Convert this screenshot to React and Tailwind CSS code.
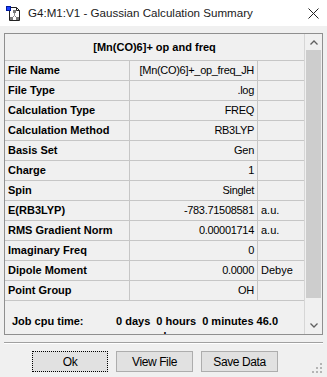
import React from 'react';

const rows = [
  ['File Name', '[Mn(CO)6]+_op_freq_JH', ''],
  ['File Type', '.log', ''],
  ['Calculation Type', 'FREQ', ''],
  ['Calculation Method', 'RB3LYP', ''],
  ['Basis Set', 'Gen', ''],
  ['Charge', '1', ''],
  ['Spin', 'Singlet', ''],
  ['E(RB3LYP)', '-783.71508581', 'a.u.'],
  ['RMS Gradient Norm', '0.00001714', 'a.u.'],
  ['Imaginary Freq', '0', ''],
  ['Dipole Moment', '0.0000', 'Debye'],
  ['Point Group', 'OH', ''],
];

function AppIcon() {
  return (
    <svg width="16" height="16" viewBox="0 0 16 16" className="shrink-0">
      <path d="M3.5 1.5h7l3 3v10h-10z" fill="#fff" stroke="#222" />
      <path d="M10.5 1.5v3h3" fill="none" stroke="#222" />
      <path d="M8.5 5.5v4M8.5 9.5l-3 3M8.5 9.5l3 3" stroke="#8a8a8a" strokeWidth="1" />
      <rect x="7" y="4" width="3" height="3" fill="#7a7a7a" />
      <rect x="4" y="11" width="3" height="3" fill="#7a7a7a" />
      <rect x="10" y="11" width="3" height="3" fill="#7a7a7a" />
      <rect x="0.5" y="0.5" width="4" height="4" fill="#1b3fff" stroke="#001a9a" />
    </svg>
  );
}

function Chevron({ down }) {
  return (
    <svg width="8" height="5" viewBox="0 0 8 5">
      <path
        d={down ? 'M0.5 0.5L4 4L7.5 0.5' : 'M0.5 4.5L4 1L7.5 4.5'}
        fill="none"
        stroke="#606060"
        strokeWidth="1.3"
      />
    </svg>
  );
}

function SizeGrip() {
  const dots = [
    [8, 0],
    [4, 4], [8, 4],
    [0, 8], [4, 8], [8, 8],
  ];
  return (
    <svg width="10" height="10" viewBox="0 0 10 10">
      {dots.map(([x, y]) => (
        <rect key={`${x}-${y}`} x={x} y={y} width="2" height="2" fill="#b4b4b4" />
      ))}
    </svg>
  );
}

export default function App() {
  return (
    <div className="w-[327px] h-[377px] bg-[#f0f0f0] overflow-hidden text-black font-['Liberation_Sans',Arial,sans-serif]">
      {/* title bar */}
      <div className="h-[26px] bg-white flex items-center">
        <div className="ml-[6px] mt-[1px]">
          <AppIcon />
        </div>
        <span className="ml-[6px] text-[11.6px] text-[#1a1a1a]">G4:M1:V1 - Gaussian Calculation Summary</span>
        <svg width="11" height="11" viewBox="0 0 11 11" className="ml-auto mr-[8px]">
          <path d="M0.5 0.5L10.5 10.5M10.5 0.5L0.5 10.5" stroke="#222" strokeWidth="1" />
        </svg>
      </div>

      {/* summary panel */}
      <div className="mt-[7px] ml-[4px] w-[319px] h-[302px] border border-[#8f8f8f] flex">
        <div className="flex-1 overflow-hidden">
          <div className="h-[27px] border-b border-[#c6c6c6] flex items-center justify-center text-[11px] font-bold">
            [Mn(CO)6]+ op and freq
          </div>
          {rows.map(([label, value, unit]) => (
            <div key={label} className="h-[20px] border-b border-[#c6c6c6] flex text-[11px]">
              <div className="w-[125px] border-r border-[#c6c6c6] pl-[3px] flex items-center font-bold">
                {label}
              </div>
              <div className="w-[128px] border-r border-[#c6c6c6] pr-[3px] flex items-center justify-end tracking-[-0.3px]">
                {value}
              </div>
              <div className="flex-1 pl-[3px] flex items-center">{unit}</div>
            </div>
          ))}
          <div className="pt-[13px] text-[11px] font-bold leading-[15px]">
            <div className="flex">
              <span className="w-[111px] pl-[7px]">Job cpu time:</span>
              <span className="whitespace-pre">0 days  0 hours  0 minutes 46.0</span>
            </div>
            <div className="pl-[123px]">seconds</div>
          </div>
        </div>
        <div className="w-[18px] border-l border-[#d6d6d6] flex flex-col">
          <div className="h-[16px] flex items-center justify-center">
            <Chevron />
          </div>
          <div className="h-[248px] mx-[1px] bg-[#cdcdcd]" />
          <div className="flex-1" />
          <div className="h-[17px] flex items-center justify-center">
            <Chevron down />
          </div>
        </div>
      </div>

      {/* separator */}
      <div className="mt-[7px] ml-[4px] w-[319px] h-[2px] border-t border-[#a0a0a0] border-b border-b-white" />

      {/* buttons */}
      <div className="mt-[7px] flex items-start text-[12px]">
        <button className="ml-[32px] w-[76px] h-[21px] bg-[#e1e1e1] border border-dotted border-black tracking-[-0.4px]">
          Ok
        </button>
        <button className="ml-[8px] w-[77px] h-[21px] bg-[#e1e1e1] border border-[#adadad] tracking-[-0.4px]">
          View File
        </button>
        <button className="ml-[8px] w-[77px] h-[21px] bg-[#e1e1e1] border border-[#adadad] tracking-[-0.4px]">
          Save Data
        </button>
        <div className="ml-auto mr-[5px] mt-[12px]">
          <SizeGrip />
        </div>
      </div>
    </div>
  );
}
